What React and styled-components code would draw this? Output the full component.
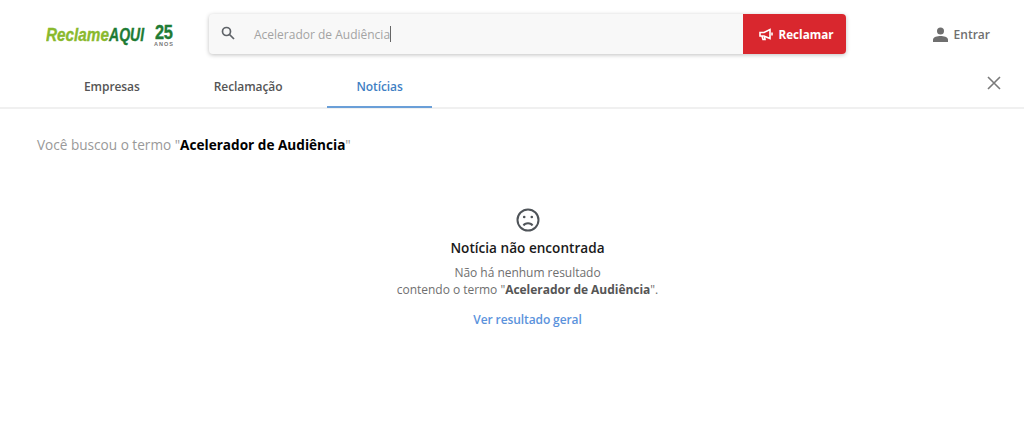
import React from 'react';
import styled, { createGlobalStyle } from 'styled-components';

const GlobalStyle = createGlobalStyle`
  html, body { margin: 0; padding: 0; background: #fff; }
  body { font-family: "Open Sans", sans-serif; }
`;

const Page = styled.div`
  width: 1024px;
  height: 437px;
  overflow: hidden;
  background: #fff;
`;

const TopBar = styled.header`
  display: flex;
  align-items: center;
  height: 40px;
  padding: 14px 34px 12px 46px;
`;

const Logo = styled.div`
  display: flex;
  align-items: center;
  width: 163px;
  flex-shrink: 0;
`;

const SearchBox = styled.div`
  display: flex;
  width: 637px;
  height: 40px;
  flex-shrink: 0;
  border-radius: 4px;
  background: #f8f8f8;
  box-shadow: 0 1px 4px rgba(0, 0, 0, 0.25);
`;

const SearchIcon = styled.div`
  display: flex;
  align-items: center;
  padding: 0 14px 2px 12px;
  width: 14px;
  color: #5f6368;
`;

const SearchField = styled.div`
  flex: 1;
  display: flex;
  align-items: center;
  padding-left: 5px;
  font-size: 12px;
  color: #a3a3a3;
`;

const Caret = styled.span`
  display: inline-block;
  width: 1px;
  height: 16px;
  background: #666;
`;

const ReclamarButton = styled.button`
  display: flex;
  align-items: center;
  justify-content: center;
  gap: 4px;
  width: 103px;
  border: 0;
  padding: 0 0 0 4px;
  border-radius: 0 4px 4px 0;
  background: #d9272e;
  color: #fff;
  font-family: "Open Sans", sans-serif;
  font-size: 11.7px;
  font-weight: 700;
`;

const LoginLink = styled.a`
  display: flex;
  align-items: center;
  gap: 6px;
  margin-left: auto;
  font-size: 12px;
  font-weight: 600;
  color: #6f6f6f;
`;

const TabBar = styled.nav`
  display: flex;
  align-items: center;
  height: 41px;
  padding: 0 23px 0 55px;
  border-bottom: 2px solid #f0f0f0;
`;

const Tab = styled.a`
  display: flex;
  align-items: center;
  height: 41px;
  margin-right: 16px;
  margin-bottom: -2px;
  padding: 0 29px;
  box-sizing: border-box;
  font-size: 12px;
  letter-spacing: -0.08px;
  font-weight: 600;
  color: ${p => (p.$active ? '#3f7fc4' : '#555')};
  border-bottom: 2px solid ${p => (p.$active ? '#6a9fd8' : 'transparent')};
`;

const CloseButton = styled.div`
  display: flex;
  margin-left: auto;
  margin-top: -8px;
  color: #7a7a7a;
`;

const Results = styled.main`
  padding: 26px 37px 0;
`;

const Term = styled.p`
  margin: 0;
  font-size: 13.6px;
  line-height: 20px;
  color: #999;
`;

const TermStrong = styled.strong`
  font-weight: 700;
  color: #000;
`;

const Empty = styled.section`
  display: flex;
  flex-direction: column;
  align-items: center;
  margin: 53px -37px 0;
  padding-left: 31px;
`;

const EmptyTitle = styled.h2`
  margin: 6px 0 0;
  font-size: 13.6px;
  line-height: 20px;
  font-weight: 600;
  color: #1a1a1a;
`;

const EmptyText = styled.p`
  margin: 6px 0 0;
  font-size: 12px;
  letter-spacing: -0.03px;
  line-height: 17px;
  text-align: center;
  color: #6f6f6f;
`;

const EmptyStrong = styled.strong`
  font-weight: 700;
  color: #555;
`;

const GeneralLink = styled.a`
  margin-top: 13px;
  font-size: 12px;
  letter-spacing: -0.1px;
  line-height: 17px;
  font-weight: 600;
  color: #5b93dc;
`;

export default function App() {
  return (
    <Page>
      <GlobalStyle />
      <TopBar>
        <Logo>
          <svg width="130" height="26" viewBox="0 0 130 26" fontFamily="Liberation Sans, sans-serif" fontWeight="700">
            <text transform="translate(0 20) scale(0.85 1)" fontSize="18" fontStyle="italic" fill="#8ab92d" stroke="#8ab92d" strokeWidth="0.35">Reclame</text>
            <text transform="translate(63 20) scale(0.78 1)" fontSize="18" fontStyle="italic" fill="#1e7b34" stroke="#1e7b34" strokeWidth="0.35">AQUI</text>
            <text transform="translate(109 18) scale(0.82 1)" fontSize="20" letterSpacing="-0.5" fill="#1e7b34" stroke="#1e7b34" strokeWidth="0.4">25</text>
            <text x="108" y="24.5" fontSize="5.5" letterSpacing="1" fill="#777">ANOS</text>
          </svg>
        </Logo>
        <SearchBox>
          <SearchIcon>
            <svg width="14" height="14" viewBox="0 0 14 14" fill="none" stroke="currentColor" strokeWidth="1.7">
              <circle cx="5.5" cy="5.5" r="4" />
              <path d="M8.5 8.5 L13 13" />
            </svg>
          </SearchIcon>
          <SearchField>Acelerador de Audiência<Caret /></SearchField>
          <ReclamarButton>
            <svg width="15" height="13" viewBox="0 0 15 13" fill="none" stroke="#fff" strokeWidth="1.6">
              <path d="M1 4.5 H5 L11 1.5 V10.5 L5 8 H1 Z" />
              <path d="M3 8 L4 11.5 H6 L5.5 8.5" />
              <path d="M13 4.5 V7.5" />
            </svg>
            Reclamar
          </ReclamarButton>
        </SearchBox>
        <LoginLink>
          <svg width="15" height="15" viewBox="0 0 15 15" fill="currentColor">
            <circle cx="7.5" cy="4" r="3.5" />
            <path d="M0 15 V12.5 C0 10 4.5 9 7.5 9 C10.5 9 15 10 15 12.5 V15 Z" />
          </svg>
          Entrar
        </LoginLink>
      </TopBar>
      <TabBar>
        <Tab>Empresas</Tab>
        <Tab>Reclamação</Tab>
        <Tab $active>Notícias</Tab>
        <CloseButton>
          <svg width="14" height="14" viewBox="0 0 14 14" fill="none" stroke="currentColor" strokeWidth="1.6">
            <path d="M1 1 L13 13 M13 1 L1 13" />
          </svg>
        </CloseButton>
      </TabBar>
      <Results>
        <Term>Você buscou o termo "<TermStrong>Acelerador de Audiência</TermStrong>"</Term>
        <Empty>
          <svg width="24" height="24" viewBox="0 0 24 24" fill="none" stroke="#4f5459" strokeWidth="2">
            <circle cx="12" cy="12" r="10.5" />
            <path d="M7.5 17.5 C9 14.5 15 14.5 16.5 17.5" />
            <circle cx="8.2" cy="9" r="1.3" fill="#4f5459" stroke="none" />
            <circle cx="15.8" cy="9" r="1.3" fill="#4f5459" stroke="none" />
          </svg>
          <EmptyTitle>Notícia não encontrada</EmptyTitle>
          <EmptyText>
            Não há nenhum resultado<br />
            contendo o termo "<EmptyStrong>Acelerador de Audiência</EmptyStrong>".
          </EmptyText>
          <GeneralLink>Ver resultado geral</GeneralLink>
        </Empty>
      </Results>
    </Page>
  );
}
